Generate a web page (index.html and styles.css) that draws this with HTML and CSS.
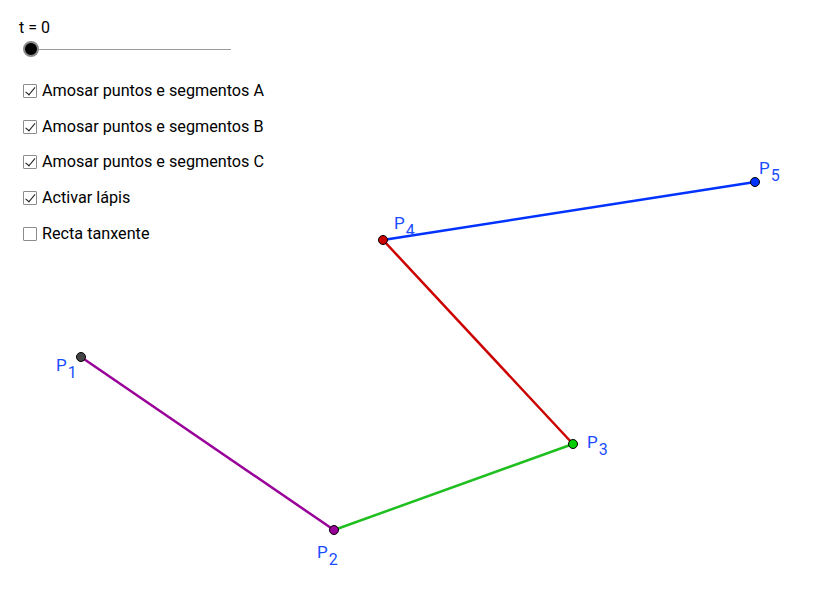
FILE: index.html
```html
<!DOCTYPE html>
<html>
<head>
<meta charset="utf-8">
<link rel="stylesheet" href="styles.css">
</head>
<body>
<div class="app">
  <svg class="canvas" width="833" height="603" viewBox="0 0 833 603">
    <line x1="81" y1="357" x2="334" y2="530" stroke="#990099" stroke-width="2.5"/>
    <line x1="334" y1="530" x2="573" y2="444" stroke="#1fbf1f" stroke-width="2.5"/>
    <line x1="573" y1="444" x2="383" y2="240" stroke="#cc0000" stroke-width="2.5"/>
    <line x1="383" y1="240" x2="755" y2="182" stroke="#0033ff" stroke-width="2.5"/>
    <circle cx="81" cy="357" r="4.5" fill="#444444" stroke="#000" stroke-width="1"/>
    <circle cx="334" cy="530" r="4.5" fill="#990099" stroke="#000" stroke-width="1"/>
    <circle cx="573" cy="444" r="4.5" fill="#00cc00" stroke="#000" stroke-width="1"/>
    <circle cx="383" cy="240" r="4.5" fill="#cc0000" stroke="#000" stroke-width="1"/>
    <circle cx="755" cy="182" r="4.5" fill="#0033ff" stroke="#000" stroke-width="1"/>
    <g class="lbl">
      <text x="56" y="371">P<tspan class="sub" dx="1" dy="7">1</tspan></text>
      <text x="317" y="558">P<tspan class="sub" dx="1" dy="7">2</tspan></text>
      <text x="587" y="448">P<tspan class="sub" dx="1" dy="7">3</tspan></text>
      <text x="394" y="229">P<tspan class="sub" dx="1" dy="7">4</tspan></text>
      <text x="759" y="174">P<tspan class="sub" dx="1" dy="7">5</tspan></text>
    </g>
  </svg>
  <div class="controls">
    <div class="slider">
      <div class="slider-label">t = 0</div>
      <div class="track"><span class="knob"></span></div>
    </div>
    <ul class="checks">
      <li class="check"><span class="box on"></span>Amosar puntos e segmentos A</li>
      <li class="check"><span class="box on"></span>Amosar puntos e segmentos B</li>
      <li class="check"><span class="box on"></span>Amosar puntos e segmentos C</li>
      <li class="check"><span class="box on"></span>Activar lápis</li>
      <li class="check"><span class="box"></span>Recta tanxente</li>
    </ul>
  </div>
</div>
</body>
</html>
```
FILE: styles.css
```css
html, body {
  margin: 0;
  padding: 0;
  background: #ffffff;
}
.app {
  position: relative;
  width: 833px;
  height: 603px;
  overflow: hidden;
  font-family: Roboto, "Liberation Sans", sans-serif;
  color: #000;
}
.canvas {
  position: absolute;
  left: 0;
  top: 0;
}
.lbl text {
  font-family: Roboto, "Liberation Sans", sans-serif;
  font-size: 17px;
  fill: #1a4cff;
}
.lbl .sub {
  font-size: 16px;
}
.controls {
  position: relative;
  padding: 19px 0 0 19px;
}
.slider-label {
  font-size: 16px;
  line-height: 17px;
  height: 17px;
}
.track {
  position: relative;
  margin: 13px 0 0 12px;
  width: 200px;
  height: 1px;
  background: #9a9a9a;
}
.knob {
  position: absolute;
  left: -8px;
  top: -8px;
  width: 12px;
  height: 12px;
  border-radius: 50%;
  background: #000;
  border: 2px solid #8a8a8a;
}
.checks {
  list-style: none;
  margin: 0;
  padding: 0;
  margin-top: 32px;
  margin-left: 4px;
  display: flex;
  flex-direction: column;
  gap: 17.7px;
}
.check {
  display: flex;
  align-items: center;
  font-size: 16.2px;
  line-height: 18px;
  height: 18px;
}
.box {
  position: relative;
  width: 12px;
  height: 12px;
  border: 1px solid #8c8c8c;
  border-radius: 1px;
  margin-right: 5px;
  box-sizing: content-box;
}
.box.on::after {
  content: "";
  position: absolute;
  left: 3.5px;
  top: 0px;
  width: 4px;
  height: 8.5px;
  border-right: 1.5px solid #222;
  border-bottom: 1.5px solid #222;
  transform: rotate(40deg);
}
```
